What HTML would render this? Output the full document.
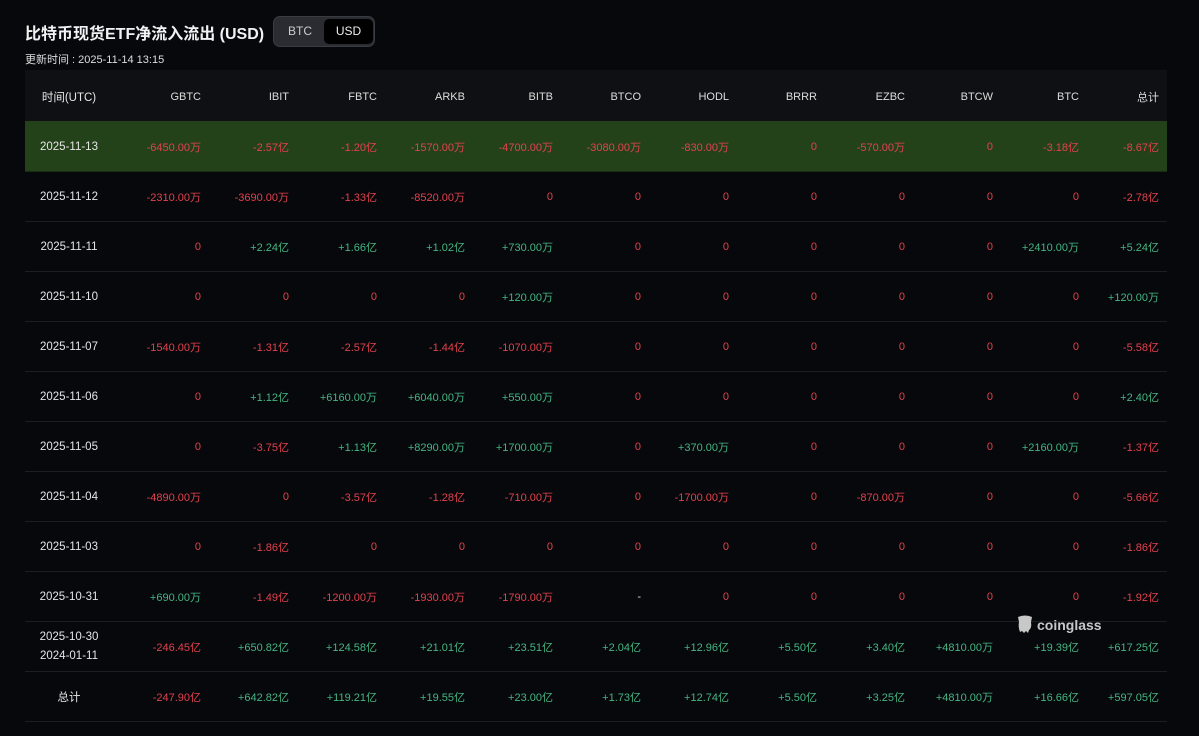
<!DOCTYPE html>
<html><head><meta charset="utf-8"><style>
body{margin:0;background:#07080c;width:1199px;height:736px;overflow:hidden;font-family:"Liberation Sans","Noto Sans CJK SC",sans-serif;color:#e8e8e8}
.t{position:absolute;left:25px;top:20px;font-size:16px;font-weight:bold;color:#f2f2f2;letter-spacing:0;white-space:nowrap}
.tog{position:absolute;left:273px;top:16px;width:102px;height:31px;border-radius:7px;background:#2a2c31;box-sizing:border-box;border:1px solid #3a3c41}
.tog span{position:absolute;top:2px;height:25px;line-height:25px;font-size:12px;text-align:center}
.u{position:absolute;left:25px;top:51px;font-size:11px;color:#ddd}
table{position:absolute;left:25px;top:70px;border-collapse:collapse;width:1142px;table-layout:fixed;font-size:11px}
td,th{height:50px;padding:2px 0 0 0;text-align:right;border-bottom:1px solid #1c1e22;box-sizing:border-box}
td:last-child,th:last-child{padding-right:8px}
th{font-weight:normal;color:#ddd;background:#0f1013;border-bottom:none;height:51px}
td:first-child,th:first-child{text-align:center;padding:2px 0 0 0;color:#e6e6e6;font-size:11.5px}
tr.h td{background:#24421a;border-bottom:1px solid #1b2a12}
.r{color:#e2414d}.g{color:#45b582}.n{color:#ddd}
.cg{position:absolute;left:1016px;top:614px;font-size:14px;font-weight:bold;color:#c8c8c8}
</style></head><body>
<div class="t">比特币现货ETF净流入流出 (USD)</div>
<div class="tog"><span style="left:2px;width:48px;color:#ccc">BTC</span><span style="left:50px;width:49px;background:#000;border-radius:5px;color:#eee">USD</span></div>
<div class="u">更新时间 : 2025-11-14 13:15</div>
<table>
<colgroup><col style="width:88px"><col span="10" style="width:88px"><col style="width:86px"><col style="width:88px"></colgroup>
<tr><th>时间(UTC)</th><th>GBTC</th><th>IBIT</th><th>FBTC</th><th>ARKB</th><th>BITB</th><th>BTCO</th><th>HODL</th><th>BRRR</th><th>EZBC</th><th>BTCW</th><th>BTC</th><th>总计</th></tr>
<tr class="h"><td>2025-11-13</td><td class="r">-6450.00万</td><td class="r">-2.57亿</td><td class="r">-1.20亿</td><td class="r">-1570.00万</td><td class="r">-4700.00万</td><td class="r">-3080.00万</td><td class="r">-830.00万</td><td class="r">0</td><td class="r">-570.00万</td><td class="r">0</td><td class="r">-3.18亿</td><td class="r">-8.67亿</td></tr>
<tr><td>2025-11-12</td><td class="r">-2310.00万</td><td class="r">-3690.00万</td><td class="r">-1.33亿</td><td class="r">-8520.00万</td><td class="r">0</td><td class="r">0</td><td class="r">0</td><td class="r">0</td><td class="r">0</td><td class="r">0</td><td class="r">0</td><td class="r">-2.78亿</td></tr>
<tr><td>2025-11-11</td><td class="r">0</td><td class="g">+2.24亿</td><td class="g">+1.66亿</td><td class="g">+1.02亿</td><td class="g">+730.00万</td><td class="r">0</td><td class="r">0</td><td class="r">0</td><td class="r">0</td><td class="r">0</td><td class="g">+2410.00万</td><td class="g">+5.24亿</td></tr>
<tr><td>2025-11-10</td><td class="r">0</td><td class="r">0</td><td class="r">0</td><td class="r">0</td><td class="g">+120.00万</td><td class="r">0</td><td class="r">0</td><td class="r">0</td><td class="r">0</td><td class="r">0</td><td class="r">0</td><td class="g">+120.00万</td></tr>
<tr><td>2025-11-07</td><td class="r">-1540.00万</td><td class="r">-1.31亿</td><td class="r">-2.57亿</td><td class="r">-1.44亿</td><td class="r">-1070.00万</td><td class="r">0</td><td class="r">0</td><td class="r">0</td><td class="r">0</td><td class="r">0</td><td class="r">0</td><td class="r">-5.58亿</td></tr>
<tr><td>2025-11-06</td><td class="r">0</td><td class="g">+1.12亿</td><td class="g">+6160.00万</td><td class="g">+6040.00万</td><td class="g">+550.00万</td><td class="r">0</td><td class="r">0</td><td class="r">0</td><td class="r">0</td><td class="r">0</td><td class="r">0</td><td class="g">+2.40亿</td></tr>
<tr><td>2025-11-05</td><td class="r">0</td><td class="r">-3.75亿</td><td class="g">+1.13亿</td><td class="g">+8290.00万</td><td class="g">+1700.00万</td><td class="r">0</td><td class="g">+370.00万</td><td class="r">0</td><td class="r">0</td><td class="r">0</td><td class="g">+2160.00万</td><td class="r">-1.37亿</td></tr>
<tr><td>2025-11-04</td><td class="r">-4890.00万</td><td class="r">0</td><td class="r">-3.57亿</td><td class="r">-1.28亿</td><td class="r">-710.00万</td><td class="r">0</td><td class="r">-1700.00万</td><td class="r">0</td><td class="r">-870.00万</td><td class="r">0</td><td class="r">0</td><td class="r">-5.66亿</td></tr>
<tr><td>2025-11-03</td><td class="r">0</td><td class="r">-1.86亿</td><td class="r">0</td><td class="r">0</td><td class="r">0</td><td class="r">0</td><td class="r">0</td><td class="r">0</td><td class="r">0</td><td class="r">0</td><td class="r">0</td><td class="r">-1.86亿</td></tr>
<tr><td>2025-10-31</td><td class="g">+690.00万</td><td class="r">-1.49亿</td><td class="r">-1200.00万</td><td class="r">-1930.00万</td><td class="r">-1790.00万</td><td class="n">-</td><td class="r">0</td><td class="r">0</td><td class="r">0</td><td class="r">0</td><td class="r">0</td><td class="r">-1.92亿</td></tr>
<tr><td style="line-height:19px">2025-10-30<br>2024-01-11</td><td class="r">-246.45亿</td><td class="g">+650.82亿</td><td class="g">+124.58亿</td><td class="g">+21.01亿</td><td class="g">+23.51亿</td><td class="g">+2.04亿</td><td class="g">+12.96亿</td><td class="g">+5.50亿</td><td class="g">+3.40亿</td><td class="g">+4810.00万</td><td class="g">+19.39亿</td><td class="g">+617.25亿</td></tr>
<tr><td>总计</td><td class="r">-247.90亿</td><td class="g">+642.82亿</td><td class="g">+119.21亿</td><td class="g">+19.55亿</td><td class="g">+23.00亿</td><td class="g">+1.73亿</td><td class="g">+12.74亿</td><td class="g">+5.50亿</td><td class="g">+3.25亿</td><td class="g">+4810.00万</td><td class="g">+16.66亿</td><td class="g">+597.05亿</td></tr>
</table>
<div class="cg"><svg width="18" height="20" viewBox="0 0 18 20" style="vertical-align:-4px;margin-right:3px"><path d="M2 3 Q9 0 16 3 L15 8 Q16 14 13 16 L12 19 L10 17 L8 19 L6 17 L4 18 Q2 13 3 8 Z" fill="#c8c8c8"/></svg>coinglass</div>
</body></html>
